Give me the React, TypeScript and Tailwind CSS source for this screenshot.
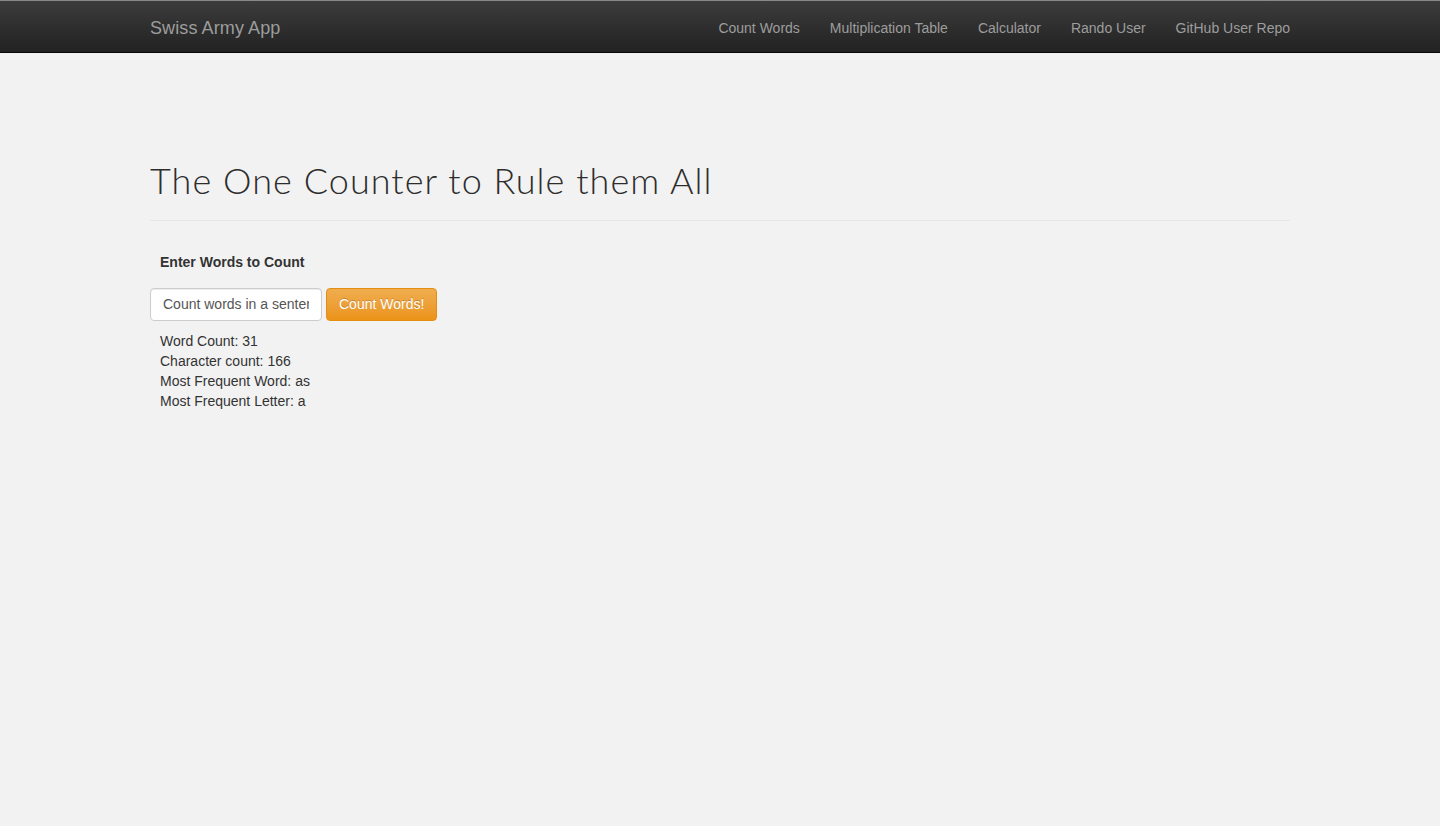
import React, { useState } from 'react';

const navLinks = ['Count Words', 'Multiplication Table', 'Calculator', 'Rando User', 'GitHub User Repo'];

export default function App() {
    const [text, setText] = useState('Count words in a sentence');

    return (
        <div className="min-h-screen bg-[#f2f2f2] text-[#333] font-['Liberation_Sans',Arial,sans-serif] text-[14px]">
            <nav className="h-[53px] pt-[3px] border-t border-[#888] border-b border-b-[#080808] bg-gradient-to-b from-[#3c3c3c] to-[#222]">
                <div className="w-[1140px] mx-auto flex items-center justify-between h-full">
                    <span className="text-[18px] text-[#9d9d9d] tracking-[0.1px]">Swiss Army App</span>
                    <ul className="flex items-center h-full">
                        {navLinks.map(link => (
                            <li key={link} className="px-[15px] last:pr-0 text-[#9d9d9d]">{link}</li>
                        ))}
                    </ul>
                </div>
            </nav>

            <main className="w-[1140px] mx-auto">
                <div className="pt-[108px] pb-[19px] border-b border-[#e6e6e6]">
                    <h1 className="text-[36px] leading-[1.1] font-light text-[#2d2d2d] font-['Lato',sans-serif] tracking-[1.05px]">
                        The One Counter to Rule them All
                    </h1>
                </div>

                <div className="pt-[31px]">
                    <label className="block pl-[10px] font-bold text-[14px] text-[#333]">Enter Words to Count</label>
                    <div className="flex items-center gap-[4px] mt-[15px]">
                        <input
                            value={text}
                            onChange={e => setText(e.target.value)}
                            className="w-[172px] h-[33px] px-[12px] bg-white border border-[#ccc] rounded-[4px] text-[14px] text-[#555] outline-none shadow-[inset_0_1px_1px_rgba(0,0,0,0.075)]"
                        />
                        <button className="h-[33px] px-[12px] rounded-[4px] border border-[#e38d13] bg-gradient-to-b from-[#f0ad4e] to-[#eb9316] text-white text-[14px] [text-shadow:0_-1px_0_rgba(0,0,0,0.2)]">
                            Count Words!
                        </button>
                    </div>
                    <div className="pl-[10px] mt-[10px] leading-[20px]">
                        <div>Word Count: 31</div>
                        <div>Character count: 166</div>
                        <div>Most Frequent Word: as</div>
                        <div>Most Frequent Letter: a</div>
                    </div>
                </div>
            </main>
        </div>
    );
}
